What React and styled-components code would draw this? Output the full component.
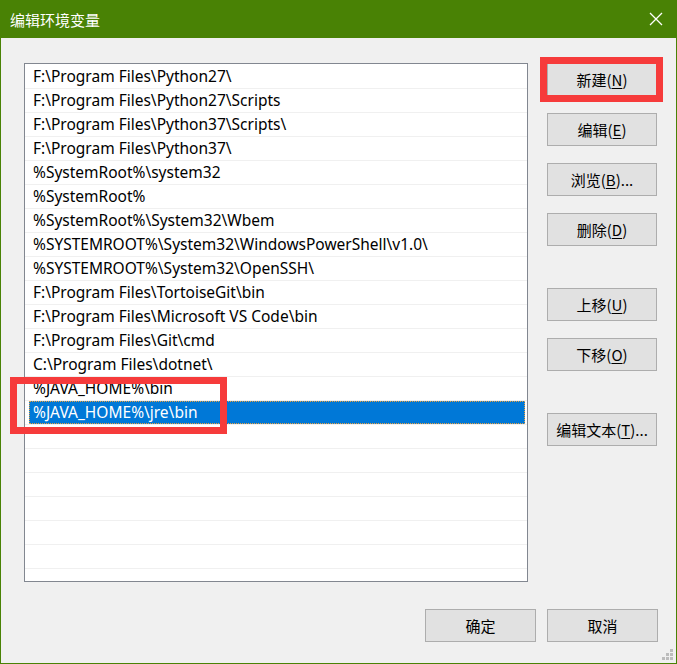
import React from "react";
import styled, { createGlobalStyle } from "styled-components";

const GlobalStyle = createGlobalStyle`
  html, body {
    margin: 0;
    padding: 0;
    background: #f0f0f0;
  }
  body {
    font-family: "Noto Sans", "Noto Sans CJK SC", sans-serif;
  }
`;

const Window = styled.div`
  position: relative;
  width: 677px;
  height: 664px;
  box-sizing: border-box;
  background: #f0f0f0;
  border: 1px solid #498205;
  border-top: none;
  display: flex;
  flex-direction: column;
`;

const TitleBar = styled.div`
  height: 38px;
  margin: 0 -1px;
  background: #498205;
  display: flex;
  align-items: center;
  justify-content: space-between;
  padding: 0 14px 0 10px;
  color: #fff;
  font-family: "Noto Sans CJK SC", sans-serif;
  font-size: 15px;
  flex-shrink: 0;
`;

const Close = styled.div`
  width: 14px;
  height: 14px;
  display: flex;
`;

const Body = styled.div`
  display: flex;
  padding: 25px 0 0 23px;
  gap: 19px;
`;

const ListWrap = styled.div`
  position: relative;
`;

const List = styled.div`
  width: 504px;
  height: 519px;
  box-sizing: border-box;
  border: 1px solid #828790;
  padding-top: 1px;
  background: #fff;
  overflow: hidden;
`;

const Row = styled.div`
  height: 24px;
  box-sizing: border-box;
  border-bottom: 1px solid #f0f0f0;
  padding: 0 2px 0 4px;
  display: flex;
  align-items: stretch;
`;

const Cell = styled.div`
  flex: 1;
  display: flex;
  align-items: center;
  padding: 1px 0 0 4px;
  font-size: 15.5px;
  line-height: 1;
  white-space: nowrap;
  color: ${(p) => (p.$selected ? "#fff" : "#000")};
  background: ${(p) => (p.$selected ? "#0078d7" : "transparent")};
  outline: ${(p) => (p.$selected ? "1px dotted #e8a040" : "none")};
  outline-offset: -1px;
`;

const Mark = styled.div`
  position: absolute;
  border: 7px solid #f63b3b;
  pointer-events: none;
`;

const ListMark = styled(Mark)`
  left: -14px;
  top: 314px;
  width: 203px;
  height: 43px;
`;

const Side = styled.div`
  width: 110px;
  display: flex;
  flex-direction: column;
`;

const Button = styled.button`
  width: ${(p) => p.$w || "110px"};
  height: 33px;
  box-sizing: border-box;
  margin-top: ${(p) => p.$gap || "0px"};
  border: 1px solid #adadad;
  background: #e1e1e1;
  color: #000;
  font-family: "Noto Sans CJK SC", sans-serif;
  font-size: 15px;
  padding: 0;
  display: flex;
  align-items: center;
  justify-content: center;
  position: relative;
`;

const Key = styled.span`
  text-decoration: underline;
  text-underline-offset: 2px;
`;

const ButtonMark = styled(Mark)`
  left: -8px;
  top: -7px;
  right: -7px;
  bottom: -7px;
`;

const Footer = styled.div`
  display: flex;
  justify-content: flex-end;
  gap: 11px;
  padding: 27px 18px 0 0;
`;

const Grip = styled.svg`
  position: absolute;
  right: 2px;
  bottom: 2px;
`;

const paths = [
  "F:\\Program Files\\Python27\\",
  "F:\\Program Files\\Python27\\Scripts",
  "F:\\Program Files\\Python37\\Scripts\\",
  "F:\\Program Files\\Python37\\",
  "%SystemRoot%\\system32",
  "%SystemRoot%",
  "%SystemRoot%\\System32\\Wbem",
  "%SYSTEMROOT%\\System32\\WindowsPowerShell\\v1.0\\",
  "%SYSTEMROOT%\\System32\\OpenSSH\\",
  "F:\\Program Files\\TortoiseGit\\bin",
  "F:\\Program Files\\Microsoft VS Code\\bin",
  "F:\\Program Files\\Git\\cmd",
  "C:\\Program Files\\dotnet\\",
  "%JAVA_HOME%\\bin",
  "%JAVA_HOME%\\jre\\bin",
];

const rows = [...paths, ...Array(7).fill("")];

const App = () => {
  return (
    <>
      <GlobalStyle />
      <Window>
        <TitleBar>
          <span>编辑环境变量</span>
          <Close>
            <svg width="14" height="14" viewBox="0 0 14 14">
              <path d="M1 1L13 13M13 1L1 13" stroke="#fff" strokeWidth="1.3" />
            </svg>
          </Close>
        </TitleBar>
        <Body>
          <ListWrap>
            <List>
              {rows.map((text, i) => (
                <Row key={i}>
                  <Cell $selected={i === 14}>{text}</Cell>
                </Row>
              ))}
            </List>
            <ListMark />
          </ListWrap>
          <Side>
            <Button>
              新建(<Key>N</Key>)
              <ButtonMark />
            </Button>
            <Button $gap="17px">编辑(<Key>E</Key>)</Button>
            <Button $gap="17px">浏览(<Key>B</Key>)...</Button>
            <Button $gap="17px">删除(<Key>D</Key>)</Button>
            <Button $gap="42px">上移(<Key>U</Key>)</Button>
            <Button $gap="17px">下移(<Key>O</Key>)</Button>
            <Button $gap="42px">编辑文本(<Key>T</Key>)...</Button>
          </Side>
        </Body>
        <Footer>
          <Button $w="111px">确定</Button>
          <Button $w="111px">取消</Button>
        </Footer>
        <Grip width="12" height="12" viewBox="0 0 12 12">
          <g fill="#bcbcbc">
            <rect x="8" y="0" width="3" height="3" />
            <rect x="4" y="4" width="3" height="3" />
            <rect x="8" y="4" width="3" height="3" />
            <rect x="0" y="8" width="3" height="3" />
            <rect x="4" y="8" width="3" height="3" />
            <rect x="8" y="8" width="3" height="3" />
          </g>
        </Grip>
      </Window>
    </>
  );
};

export default App;
